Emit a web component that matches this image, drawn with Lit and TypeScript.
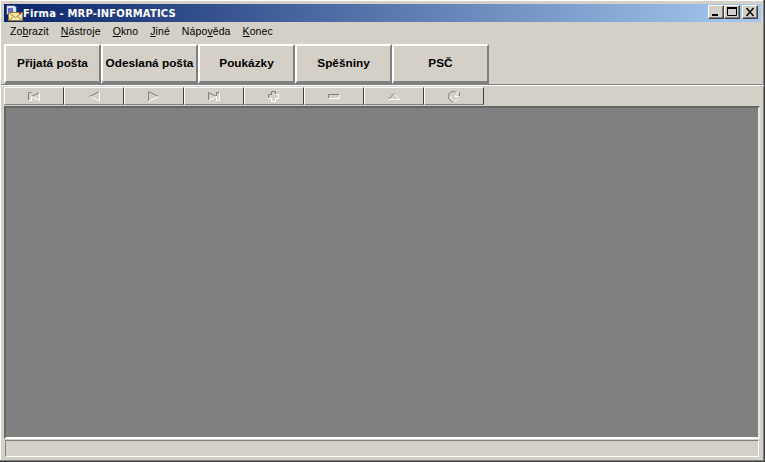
import { LitElement, html, css, svg } from "lit";
import { customElement } from "lit/decorators.js";

const menus: [string, string, string][] = [
  ["Zo", "b", "razit"], ["", "N", "ástroje"], ["", "O", "kno"], ["", "J", "iné"], ["Nápo", "v", "ěda"], ["", "K", "onec"],
];
const mainButtons = ["Přijatá pošta", "Odeslaná pošta", "Poukázky", "Spěšniny", "PSČ"];
const L = "#fff", D = "#808080";
const navIcons = [
  svg`<path d="M6.500 4.500h-3v8M6.500 8.500l8-4" fill="none" stroke="${D}"/><path d="M3.500 12.500h3v-4l8 4v-8" fill="none" stroke="${L}"/>`,
  svg`<path d="M14.500 3.500 4.500 8.500l1 .5" fill="none" stroke="${D}"/><path d="M5 8.500l9.500 4.500V3.500" fill="none" stroke="${L}"/>`,
  svg`<path d="M3.500 13V3.500l10 5" fill="none" stroke="${D}"/><path d="M3.500 13.500l10-5" fill="none" stroke="${L}"/>`,
  svg`<path d="M3.500 12.500v-8l8 4M11.500 8V4.500h3" fill="none" stroke="${D}"/><path d="M3.500 12.500l8-4v4h3v-8" fill="none" stroke="${L}"/>`,
  svg`<path d="M3.500 10V6.500h3v-3h4v3" fill="none" stroke="${D}"/><path d="M3.500 10.500h3v3h4v-3h3v-4h-3" fill="none" stroke="${L}"/>`,
  svg`<path d="M3.500 10V6.500h11" fill="none" stroke="${D}"/><path d="M3.500 10.500h11V6.500" fill="none" stroke="${L}"/>`,
  svg`<path d="M3 11.500l6-6 1 1" fill="none" stroke="${D}"/><path d="M3 11.500h12l-5.500-5.500" fill="none" stroke="${L}"/>`,
  svg`<path d="M8.500 13.500c-3 0-5-2-5-5 0-3 2-5 5-5l2 .5M14.500 3.500v5h-5" fill="none" stroke="${D}"/><path d="M5.500 8.500c0 2.500 2 4.500 4 4.500 1.500 0 3-1 4-2.500M14.500 8.500h-5l5-5" fill="none" stroke="${L}"/>`,
];

@customElement("app-root")
export class AppRoot extends LitElement {
  static styles = css`
    :host { display: block; width: 765px; height: 462px; overflow: hidden; }
    * { box-sizing: border-box; }
    .win { width: 765px; height: 462px; background: #d4d0c8; display: flex; flex-direction: column;
      padding: 4px; font-family: "Liberation Sans", sans-serif; color: #000;
      border-right: 1px solid #404040; border-bottom: 1px solid #404040;
      box-shadow: inset -1px -1px 0 #808080, inset 1px 1px 0 #fff; }
    .title { height: 18px; flex: none; display: flex; align-items: center; margin-right: -1px;
      background: linear-gradient(90deg, #0a246a, #a6caf0); padding: 0 3px 0 1px; }
    .appicon { width: 18px; height: 18px; flex: none; }
    .title b { font: bold 10px "DejaVu Sans", sans-serif; color: #fff; white-space: nowrap; letter-spacing: 0.13px; }
    .ctrls { margin-left: auto; display: flex; margin-bottom: 2px; }
    .ctrl { width: 16px; height: 14px; background: #d4d0c8; border: 1px solid; border-color: #fff #404040 #404040 #fff;
      box-shadow: inset -1px -1px 0 #808080; display: flex; }
    .ctrl svg { width: 14px; height: 12px; display: block; }
    .ctrl.close { margin-left: 2px; }
    .menu { height: 18px; flex: none; display: flex; align-items: center; font-size: 10.500px; letter-spacing: 0.1px; padding-left: 6px; gap: 12px; }
    .menu u { text-underline-offset: 1px; }
    .mainbar { flex: none; display: flex; margin-top: 4px; height: 40px; }
    .mbtn { width: 97px; height: 40px; flex: none; border-style: solid; border-width: 2px 2px 3px 2px;
      border-color: #fff #808080 #808080 #fff; background: #d4d0c8; display: flex; align-items: center; justify-content: center;
      font: bold 11.800px "Liberation Sans", sans-serif; white-space: nowrap; padding-bottom: 1px; }
    .sep { height: 2px; flex: none; margin: 0 -4px 0 -3px; background: #808080; border-bottom: 1px solid #fff; }
    .nav { display: flex; flex: none; height: 18px; margin-top: 1px; }
    .nbtn { width: 60px; height: 18px; border: 1px solid; border-color: #fff #404040 #808080 #fff; display: flex; align-items: center; justify-content: center; flex: none; }
    .nbtn svg { width: 18px; height: 16px; display: block; }
    .work { flex: 1; margin-top: 1px; background: #808080; border: 2px solid; border-color: #666 #e8e6e1 #fff #666; }
    .status { flex: none; height: 17px; margin: 1px 1px 0; border: 1px solid; border-color: #808080 #fff #fff #808080; }
  `;

  render() {
    return html`<div class="win">
      <div class="title">
        <svg class="appicon" viewBox="0 0 18 18">
          <path d="M1.500 1.500h8l2 2v7h-10z" fill="#d8e0f0" stroke="#44508c"/>
          <rect x="3" y="4" width="5" height="4" fill="#6070c8"/>
          <rect x="3.500" y="8.500" width="14" height="8" fill="#f8e8a0" stroke="#8a7a40"/>
          <path d="M3.500 8.500l7 5 7-5M3.500 16.500l5-4M17.500 16.500l-5-4" fill="none" stroke="#a08a50"/>
          <rect x="14" y="8" width="2" height="2" fill="#e02020"/>
        </svg>
        <b>Firma - MRP-INFORMATICS</b>
        <div class="ctrls">
          <div class="ctrl"><svg viewBox="0 0 14 12"><rect x="3" y="8" width="6" height="2"/></svg></div>
          <div class="ctrl"><svg viewBox="0 0 14 12"><path d="M2.500 1.500h9v8h-9z" fill="none" stroke="#000"/><rect x="2" y="1" width="10" height="2"/></svg></div>
          <div class="ctrl close"><svg viewBox="0 0 14 12"><path d="M3.500 2l7 8M10.500 2l-7 8" stroke="#000" stroke-width="1.500" fill="none"/></svg></div>
        </div>
      </div>
      <div class="menu">${menus.map(([a, u, b]) => html`<span>${a}<u>${u}</u>${b}</span>`)}</div>
      <div class="mainbar">${mainButtons.map((t) => html`<div class="mbtn">${t}</div>`)}</div>
      <div class="sep"></div>
      <div class="nav">${navIcons.map((i) => html`<div class="nbtn"><svg viewBox="0 0 18 16">${i}</svg></div>`)}</div>
      <div class="work"></div>
      <div class="status"></div>
    </div>`;
  }
}
